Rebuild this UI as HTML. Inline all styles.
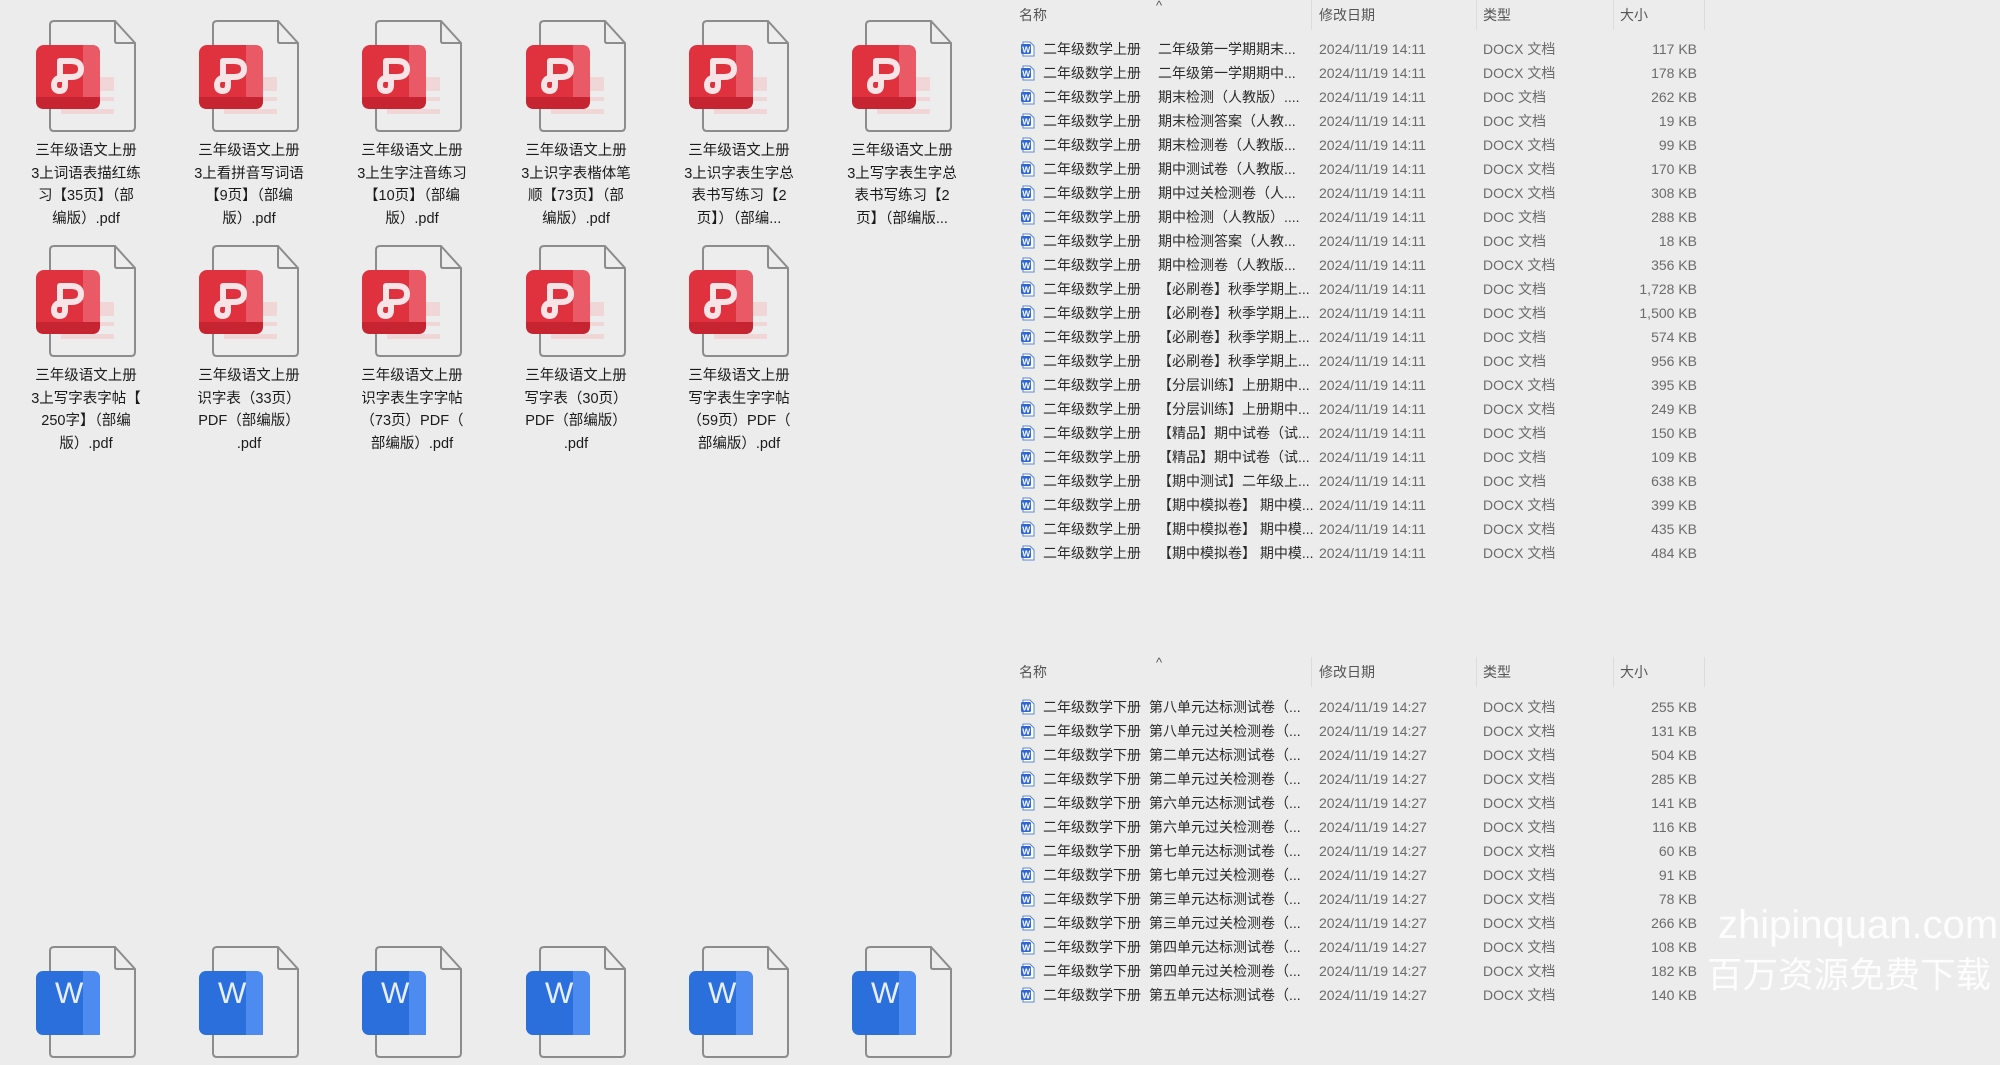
<!DOCTYPE html>
<html><head><meta charset="utf-8">
<style>
*{margin:0;padding:0;box-sizing:border-box}
body{width:2000px;height:1000px;background:#ececec;position:relative;overflow:hidden;font-family:"Liberation Sans","Noto Sans CJK SC",sans-serif}
.ic{position:absolute;width:110px;height:120px}
.lb{position:absolute;width:150px;text-align:center;font-size:14.5px;line-height:22.5px;color:#1a1a1a;white-space:nowrap}
.hd{position:absolute;font-size:14px;color:#555;height:30px;line-height:30px}
.sep{position:absolute;width:1px;height:30px;background:#dcdcdc}
.row{position:absolute;left:1018px;height:24px;line-height:24px;font-size:14px;width:690px;white-space:nowrap}
.row svg{position:absolute;left:2px;top:4px}
.row .n{position:absolute;left:25px;color:#2a2a2a}
.row .m{position:absolute;left:140px;color:#2a2a2a}
.row .d{position:absolute;left:301px;color:#6b6b6b}
.row .t{position:absolute;left:465px;color:#6b6b6b}
.row .s{position:absolute;right:11px;color:#6b6b6b}
.l2 .m{left:131px}
.wm{position:absolute;color:rgba(255,255,255,.9);white-space:nowrap}
</style></head><body>
<svg width="0" height="0" style="position:absolute">
<defs>
<g id="pdf">
<path d="M17 6 Q17 2 21 2 H82 L102 24 V108 Q102 112 98 112 H21 Q17 112 17 108 Z" fill="#ededed" stroke="#8c8c8c" stroke-width="2"/>
<path d="M82 2 V22 Q82 24 84 24 H102" fill="none" stroke="#8c8c8c" stroke-width="2"/>
<rect x="63" y="58" width="18" height="14" fill="#f1d6d8"/>
<rect x="63" y="78" width="18" height="4" fill="#f1d6d8"/>
<rect x="28" y="90" width="53" height="5" fill="#f1d6d8"/>
<rect x="3" y="26" width="64" height="64" rx="8" fill="#e0313f"/>
<path d="M50 26 H59 Q67 26 67 34 V82 Q67 90 59 90 H50 Z" fill="#ea5a66"/>
<path d="M3 78 H67 V82 Q67 90 59 90 H11 Q3 90 3 82 Z" fill="#c72432"/>
<path d="M27 63 V42 H38 Q48 42 48 50 Q48 58 38 58 H32 Q21 58 21 66 Q21 72 27 72 Q32 72 32 66 V58" fill="none" stroke="#f7e4e6" stroke-width="6" stroke-linejoin="round"/>
</g>
<g id="doc">
<path d="M17 6 Q17 2 21 2 H82 L102 24 V108 Q102 112 98 112 H21 Q17 112 17 108 Z" fill="#ededed" stroke="#8c8c8c" stroke-width="2"/>
<path d="M82 2 V22 Q82 24 84 24 H102" fill="none" stroke="#8c8c8c" stroke-width="2"/>
<rect x="3" y="26" width="64" height="64" rx="7" fill="#2b6fdc"/>
<path d="M50 26 H60 Q67 26 67 33 V90 H50 Z" fill="#4d8bf0"/>
<text x="22" y="58" font-family="Liberation Sans" font-size="30" fill="#e8f0ff">W</text>
</g>
<g id="w">
<path d="M3 1 H10 L14 5 V15 H3 Z" fill="#fff" stroke="#5a86cf" stroke-width="1"/>
<rect x="1" y="3" width="10" height="10" rx="1.5" fill="#2f68d0"/>
<text x="2.3" y="11.5" font-family="Liberation Sans" font-size="8.5" font-weight="bold" fill="#fff">W</text>
</g>
</defs></svg>

<svg class="ic" style="left:33px;top:19px"><use href="#pdf"/></svg>
<svg class="ic" style="left:196px;top:19px"><use href="#pdf"/></svg>
<svg class="ic" style="left:359px;top:19px"><use href="#pdf"/></svg>
<svg class="ic" style="left:523px;top:19px"><use href="#pdf"/></svg>
<svg class="ic" style="left:686px;top:19px"><use href="#pdf"/></svg>
<svg class="ic" style="left:849px;top:19px"><use href="#pdf"/></svg>
<div class="lb" style="left:11px;top:140px">三年级语文上册<br>3上词语表描红练<br>习【35页】（部<br>编版）.pdf</div>
<div class="lb" style="left:174px;top:140px">三年级语文上册<br>3上看拼音写词语<br>【9页】（部编<br>版）.pdf</div>
<div class="lb" style="left:337px;top:140px">三年级语文上册<br>3上生字注音练习<br>【10页】（部编<br>版）.pdf</div>
<div class="lb" style="left:501px;top:140px">三年级语文上册<br>3上识字表楷体笔<br>顺【73页】（部<br>编版）.pdf</div>
<div class="lb" style="left:664px;top:140px">三年级语文上册<br>3上识字表生字总<br>表书写练习【2<br>页】）（部编...</div>
<div class="lb" style="left:827px;top:140px">三年级语文上册<br>3上写字表生字总<br>表书写练习【2<br>页】（部编版...</div>
<svg class="ic" style="left:33px;top:244px"><use href="#pdf"/></svg>
<svg class="ic" style="left:196px;top:244px"><use href="#pdf"/></svg>
<svg class="ic" style="left:359px;top:244px"><use href="#pdf"/></svg>
<svg class="ic" style="left:523px;top:244px"><use href="#pdf"/></svg>
<svg class="ic" style="left:686px;top:244px"><use href="#pdf"/></svg>
<div class="lb" style="left:11px;top:365px">三年级语文上册<br>3上写字表字帖【<br>250字】（部编<br>版）.pdf</div>
<div class="lb" style="left:174px;top:365px">三年级语文上册<br>识字表（33页）<br>PDF（部编版）<br>.pdf</div>
<div class="lb" style="left:337px;top:365px">三年级语文上册<br>识字表生字字帖<br>（73页）PDF（<br>部编版）.pdf</div>
<div class="lb" style="left:501px;top:365px">三年级语文上册<br>写字表（30页）<br>PDF（部编版）<br>.pdf</div>
<div class="lb" style="left:664px;top:365px">三年级语文上册<br>写字表生字字帖<br>（59页）PDF（<br>部编版）.pdf</div>
<svg class="ic" style="left:33px;top:945px"><use href="#doc"/></svg>
<svg class="ic" style="left:196px;top:945px"><use href="#doc"/></svg>
<svg class="ic" style="left:359px;top:945px"><use href="#doc"/></svg>
<svg class="ic" style="left:523px;top:945px"><use href="#doc"/></svg>
<svg class="ic" style="left:686px;top:945px"><use href="#doc"/></svg>
<svg class="ic" style="left:849px;top:945px"><use href="#doc"/></svg>

<div class="hd" style="left:1019px;top:0">名称</div>
<div class="hd" style="left:1156px;top:-9px;font-size:13px">^</div>
<div class="hd" style="left:1319px;top:0">修改日期</div>
<div class="hd" style="left:1483px;top:0">类型</div>
<div class="hd" style="left:1620px;top:0">大小</div>
<div class="sep" style="left:1311px;top:0"></div><div class="sep" style="left:1476px;top:0"></div><div class="sep" style="left:1613px;top:0"></div><div class="sep" style="left:1704px;top:0"></div>

<div class="row" style="top:37px"><svg width="16" height="16"><use href="#w"/></svg><span class="n">二年级数学上册</span><span class="m">二年级第一学期期末...</span><span class="d">2024/11/19 14:11</span><span class="t">DOCX 文档</span><span class="s">117 KB</span></div>
<div class="row" style="top:61px"><svg width="16" height="16"><use href="#w"/></svg><span class="n">二年级数学上册</span><span class="m">二年级第一学期期中...</span><span class="d">2024/11/19 14:11</span><span class="t">DOCX 文档</span><span class="s">178 KB</span></div>
<div class="row" style="top:85px"><svg width="16" height="16"><use href="#w"/></svg><span class="n">二年级数学上册</span><span class="m">期末检测（人教版）....</span><span class="d">2024/11/19 14:11</span><span class="t">DOC 文档</span><span class="s">262 KB</span></div>
<div class="row" style="top:109px"><svg width="16" height="16"><use href="#w"/></svg><span class="n">二年级数学上册</span><span class="m">期末检测答案（人教...</span><span class="d">2024/11/19 14:11</span><span class="t">DOC 文档</span><span class="s">19 KB</span></div>
<div class="row" style="top:133px"><svg width="16" height="16"><use href="#w"/></svg><span class="n">二年级数学上册</span><span class="m">期末检测卷（人教版...</span><span class="d">2024/11/19 14:11</span><span class="t">DOCX 文档</span><span class="s">99 KB</span></div>
<div class="row" style="top:157px"><svg width="16" height="16"><use href="#w"/></svg><span class="n">二年级数学上册</span><span class="m">期中测试卷（人教版...</span><span class="d">2024/11/19 14:11</span><span class="t">DOCX 文档</span><span class="s">170 KB</span></div>
<div class="row" style="top:181px"><svg width="16" height="16"><use href="#w"/></svg><span class="n">二年级数学上册</span><span class="m">期中过关检测卷（人...</span><span class="d">2024/11/19 14:11</span><span class="t">DOCX 文档</span><span class="s">308 KB</span></div>
<div class="row" style="top:205px"><svg width="16" height="16"><use href="#w"/></svg><span class="n">二年级数学上册</span><span class="m">期中检测（人教版）....</span><span class="d">2024/11/19 14:11</span><span class="t">DOC 文档</span><span class="s">288 KB</span></div>
<div class="row" style="top:229px"><svg width="16" height="16"><use href="#w"/></svg><span class="n">二年级数学上册</span><span class="m">期中检测答案（人教...</span><span class="d">2024/11/19 14:11</span><span class="t">DOC 文档</span><span class="s">18 KB</span></div>
<div class="row" style="top:253px"><svg width="16" height="16"><use href="#w"/></svg><span class="n">二年级数学上册</span><span class="m">期中检测卷（人教版...</span><span class="d">2024/11/19 14:11</span><span class="t">DOCX 文档</span><span class="s">356 KB</span></div>
<div class="row" style="top:277px"><svg width="16" height="16"><use href="#w"/></svg><span class="n">二年级数学上册</span><span class="m">【必刷卷】秋季学期上...</span><span class="d">2024/11/19 14:11</span><span class="t">DOC 文档</span><span class="s">1,728 KB</span></div>
<div class="row" style="top:301px"><svg width="16" height="16"><use href="#w"/></svg><span class="n">二年级数学上册</span><span class="m">【必刷卷】秋季学期上...</span><span class="d">2024/11/19 14:11</span><span class="t">DOC 文档</span><span class="s">1,500 KB</span></div>
<div class="row" style="top:325px"><svg width="16" height="16"><use href="#w"/></svg><span class="n">二年级数学上册</span><span class="m">【必刷卷】秋季学期上...</span><span class="d">2024/11/19 14:11</span><span class="t">DOC 文档</span><span class="s">574 KB</span></div>
<div class="row" style="top:349px"><svg width="16" height="16"><use href="#w"/></svg><span class="n">二年级数学上册</span><span class="m">【必刷卷】秋季学期上...</span><span class="d">2024/11/19 14:11</span><span class="t">DOC 文档</span><span class="s">956 KB</span></div>
<div class="row" style="top:373px"><svg width="16" height="16"><use href="#w"/></svg><span class="n">二年级数学上册</span><span class="m">【分层训练】上册期中...</span><span class="d">2024/11/19 14:11</span><span class="t">DOCX 文档</span><span class="s">395 KB</span></div>
<div class="row" style="top:397px"><svg width="16" height="16"><use href="#w"/></svg><span class="n">二年级数学上册</span><span class="m">【分层训练】上册期中...</span><span class="d">2024/11/19 14:11</span><span class="t">DOCX 文档</span><span class="s">249 KB</span></div>
<div class="row" style="top:421px"><svg width="16" height="16"><use href="#w"/></svg><span class="n">二年级数学上册</span><span class="m">【精品】期中试卷（试...</span><span class="d">2024/11/19 14:11</span><span class="t">DOC 文档</span><span class="s">150 KB</span></div>
<div class="row" style="top:445px"><svg width="16" height="16"><use href="#w"/></svg><span class="n">二年级数学上册</span><span class="m">【精品】期中试卷（试...</span><span class="d">2024/11/19 14:11</span><span class="t">DOC 文档</span><span class="s">109 KB</span></div>
<div class="row" style="top:469px"><svg width="16" height="16"><use href="#w"/></svg><span class="n">二年级数学上册</span><span class="m">【期中测试】二年级上...</span><span class="d">2024/11/19 14:11</span><span class="t">DOC 文档</span><span class="s">638 KB</span></div>
<div class="row" style="top:493px"><svg width="16" height="16"><use href="#w"/></svg><span class="n">二年级数学上册</span><span class="m">【期中模拟卷】 期中模...</span><span class="d">2024/11/19 14:11</span><span class="t">DOCX 文档</span><span class="s">399 KB</span></div>
<div class="row" style="top:517px"><svg width="16" height="16"><use href="#w"/></svg><span class="n">二年级数学上册</span><span class="m">【期中模拟卷】 期中模...</span><span class="d">2024/11/19 14:11</span><span class="t">DOCX 文档</span><span class="s">435 KB</span></div>
<div class="row" style="top:541px"><svg width="16" height="16"><use href="#w"/></svg><span class="n">二年级数学上册</span><span class="m">【期中模拟卷】 期中模...</span><span class="d">2024/11/19 14:11</span><span class="t">DOCX 文档</span><span class="s">484 KB</span></div>

<div class="hd" style="left:1019px;top:657px">名称</div>
<div class="hd" style="left:1156px;top:648px;font-size:13px">^</div>
<div class="hd" style="left:1319px;top:657px">修改日期</div>
<div class="hd" style="left:1483px;top:657px">类型</div>
<div class="hd" style="left:1620px;top:657px">大小</div>
<div class="sep" style="left:1311px;top:657px"></div><div class="sep" style="left:1476px;top:657px"></div><div class="sep" style="left:1613px;top:657px"></div><div class="sep" style="left:1704px;top:657px"></div>

<div class="row l2" style="top:695px"><svg width="16" height="16"><use href="#w"/></svg><span class="n">二年级数学下册</span><span class="m">第八单元达标测试卷（...</span><span class="d">2024/11/19 14:27</span><span class="t">DOCX 文档</span><span class="s">255 KB</span></div>
<div class="row l2" style="top:719px"><svg width="16" height="16"><use href="#w"/></svg><span class="n">二年级数学下册</span><span class="m">第八单元过关检测卷（...</span><span class="d">2024/11/19 14:27</span><span class="t">DOCX 文档</span><span class="s">131 KB</span></div>
<div class="row l2" style="top:743px"><svg width="16" height="16"><use href="#w"/></svg><span class="n">二年级数学下册</span><span class="m">第二单元达标测试卷（...</span><span class="d">2024/11/19 14:27</span><span class="t">DOCX 文档</span><span class="s">504 KB</span></div>
<div class="row l2" style="top:767px"><svg width="16" height="16"><use href="#w"/></svg><span class="n">二年级数学下册</span><span class="m">第二单元过关检测卷（...</span><span class="d">2024/11/19 14:27</span><span class="t">DOCX 文档</span><span class="s">285 KB</span></div>
<div class="row l2" style="top:791px"><svg width="16" height="16"><use href="#w"/></svg><span class="n">二年级数学下册</span><span class="m">第六单元达标测试卷（...</span><span class="d">2024/11/19 14:27</span><span class="t">DOCX 文档</span><span class="s">141 KB</span></div>
<div class="row l2" style="top:815px"><svg width="16" height="16"><use href="#w"/></svg><span class="n">二年级数学下册</span><span class="m">第六单元过关检测卷（...</span><span class="d">2024/11/19 14:27</span><span class="t">DOCX 文档</span><span class="s">116 KB</span></div>
<div class="row l2" style="top:839px"><svg width="16" height="16"><use href="#w"/></svg><span class="n">二年级数学下册</span><span class="m">第七单元达标测试卷（...</span><span class="d">2024/11/19 14:27</span><span class="t">DOCX 文档</span><span class="s">60 KB</span></div>
<div class="row l2" style="top:863px"><svg width="16" height="16"><use href="#w"/></svg><span class="n">二年级数学下册</span><span class="m">第七单元过关检测卷（...</span><span class="d">2024/11/19 14:27</span><span class="t">DOCX 文档</span><span class="s">91 KB</span></div>
<div class="row l2" style="top:887px"><svg width="16" height="16"><use href="#w"/></svg><span class="n">二年级数学下册</span><span class="m">第三单元达标测试卷（...</span><span class="d">2024/11/19 14:27</span><span class="t">DOCX 文档</span><span class="s">78 KB</span></div>
<div class="row l2" style="top:911px"><svg width="16" height="16"><use href="#w"/></svg><span class="n">二年级数学下册</span><span class="m">第三单元过关检测卷（...</span><span class="d">2024/11/19 14:27</span><span class="t">DOCX 文档</span><span class="s">266 KB</span></div>
<div class="row l2" style="top:935px"><svg width="16" height="16"><use href="#w"/></svg><span class="n">二年级数学下册</span><span class="m">第四单元达标测试卷（...</span><span class="d">2024/11/19 14:27</span><span class="t">DOCX 文档</span><span class="s">108 KB</span></div>
<div class="row l2" style="top:959px"><svg width="16" height="16"><use href="#w"/></svg><span class="n">二年级数学下册</span><span class="m">第四单元过关检测卷（...</span><span class="d">2024/11/19 14:27</span><span class="t">DOCX 文档</span><span class="s">182 KB</span></div>
<div class="row l2" style="top:983px"><svg width="16" height="16"><use href="#w"/></svg><span class="n">二年级数学下册</span><span class="m">第五单元达标测试卷（...</span><span class="d">2024/11/19 14:27</span><span class="t">DOCX 文档</span><span class="s">140 KB</span></div>

<div class="wm" style="left:1718px;top:900px;font-size:40px;line-height:50px">zhipinquan.com</div>
<div class="wm" style="left:1707px;top:950px;font-size:35.5px;line-height:46px;font-family:'Noto Sans CJK SC',sans-serif">百万资源免费下载</div>
</body></html>
